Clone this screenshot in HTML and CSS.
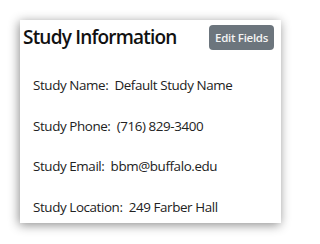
FILE: index.html
```html
<!DOCTYPE html>
<html>
<head>
<meta charset="utf-8">
<link rel="stylesheet" href="styles.css">
</head>
<body>
<div class="card">
  <div class="card-header">
    <h2 class="title">Study Information</h2>
    <button class="btn">Edit Fields</button>
  </div>
  <div class="fields">
    <div class="field">Study Name:&nbsp; Default Study Name</div>
    <div class="field">Study Phone:&nbsp; (716) 829-3400</div>
    <div class="field">Study Email:&nbsp; bbm@buffalo.edu</div>
    <div class="field">Study Location:&nbsp; 249 Farber Hall</div>
  </div>
</div>
</body>
</html>
```
FILE: styles.css
```css
html, body {
  margin: 0;
  padding: 0;
  background: #ffffff;
}
body {
  width: 301px;
  height: 244px;
  overflow: hidden;
  font-family: "Open Sans", "Noto Sans", sans-serif;
  color: #212529;
}
.card {
  margin: 20px 0 0 20px;
  width: 261px;
  height: 203px;
  background: #ffffff;
  box-shadow: -1px 2px 10px rgba(0, 0, 0, 0.45);
  display: flex;
  flex-direction: column;
}
.card-header {
  display: flex;
  justify-content: space-between;
  align-items: flex-start;
  padding: 5px 7px 0 3px;
}
.title {
  margin: 0;
  font-size: 19px;
  line-height: 24px;
  font-weight: 600;
  letter-spacing: -0.8px;
  color: #111111;
}
.btn {
  width: 65px;
  height: 25px;
  border: none;
  border-radius: 4px;
  background: #6c757d;
  color: #f4f4f4;
  font-family: "Open Sans", "Noto Sans", sans-serif;
  font-size: 11.5px;
  font-weight: 600;
  letter-spacing: -0.3px;
  padding: 0;
}
.fields {
  display: flex;
  flex-direction: column;
  padding: 25px 0 0 13px;
}
.field {
  height: 40.7px;
  font-size: 13.4px;
  line-height: 20px;
  letter-spacing: -0.4px;
  color: #222222;
}
```
